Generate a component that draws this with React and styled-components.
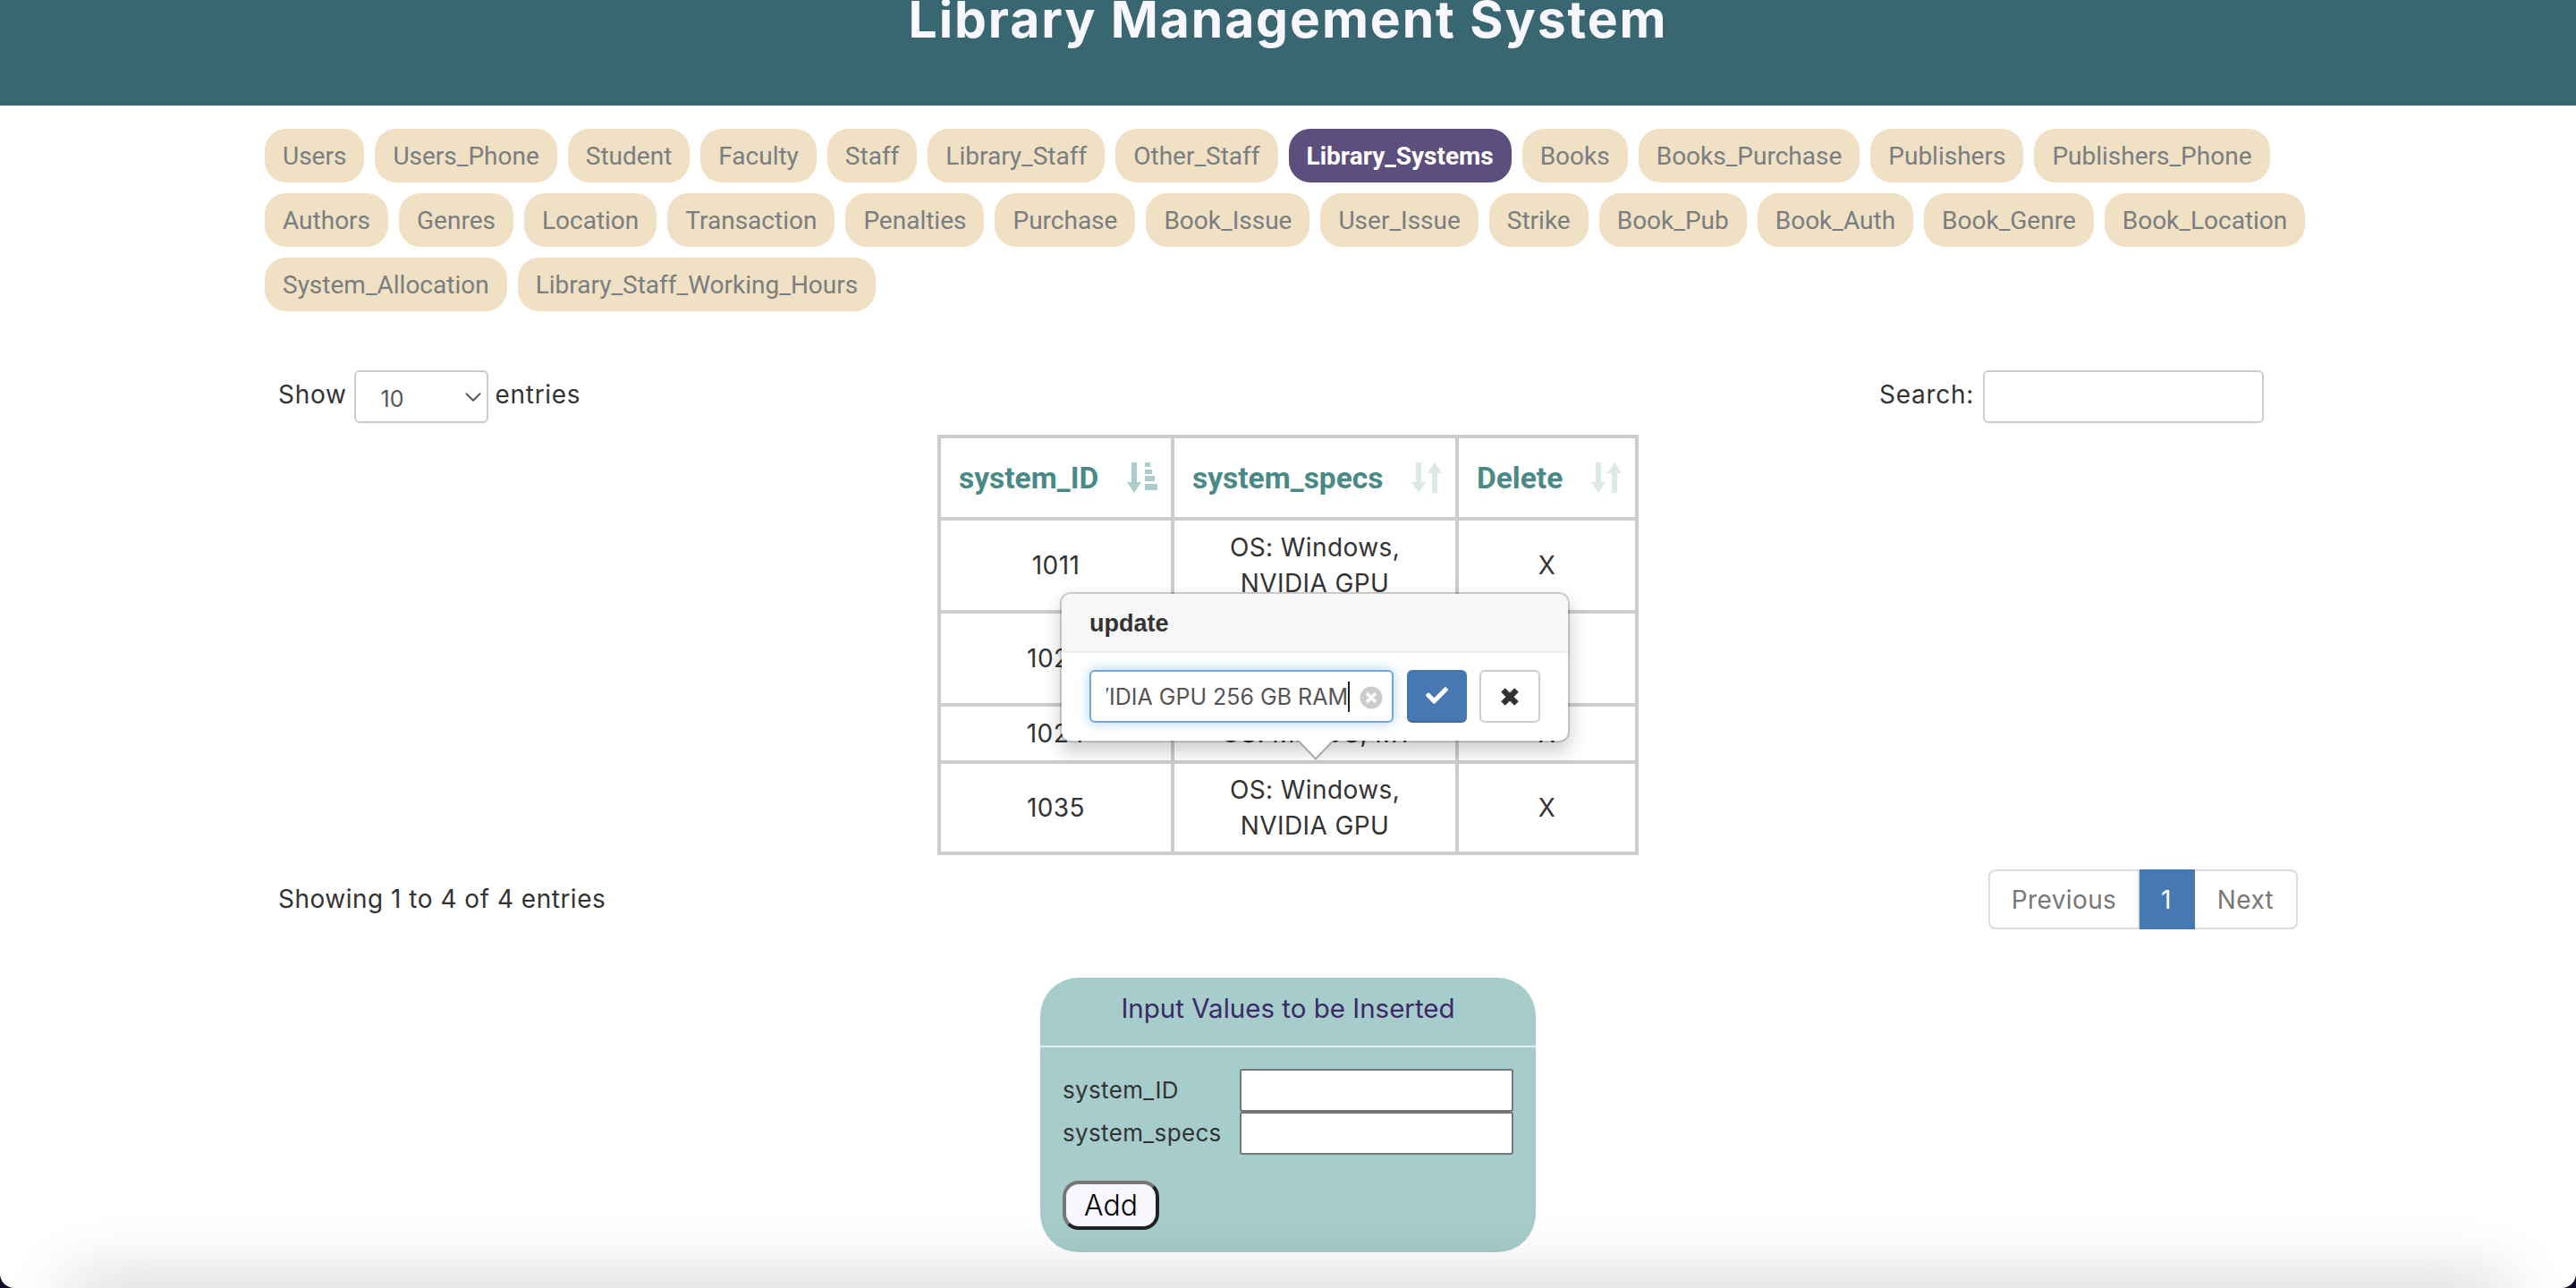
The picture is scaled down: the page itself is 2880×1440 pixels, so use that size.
import React from "react";
import styled, { createGlobalStyle } from "styled-components";
import { ChevronDown } from "lucide-react";
import { FaCheck } from "react-icons/fa";

const Global = createGlobalStyle`
  html, body { margin: 0; padding: 0; background: #fff; height: 1440px; overflow: hidden; }
  * { box-sizing: border-box; }
  body { font-family: Inter, "Liberation Sans", sans-serif; color: #333; font-size: 28px; }
`;

const Page = styled.div`
  position: relative;
  width: 2880px;
  height: 1440px;
  overflow: hidden;
  display: flex;
  flex-direction: column;
`;
const Header = styled.header`
  height: 118px;
  flex: none;
  background: #396771;
  display: flex;
  justify-content: center;
  overflow: hidden;
`;
const Title = styled.h1`
  margin: -14px 0 0;
  font-family: Inter, sans-serif;
  font-weight: 700;
  font-size: 57px;
  line-height: 72px;
  letter-spacing: 1.9px;
  color: #f8f7ff;
  white-space: nowrap;
`;
const Tabs = styled.nav`
  margin: 26px 0 0 296px;
  width: 2288px;
  display: flex;
  flex-wrap: wrap;
  gap: 12px;
`;
const Tab = styled.a`
  height: 60px;
  padding: 0 20px;
  display: flex;
  align-items: center;
  border-radius: 24px;
  font-family: Roboto, sans-serif;
  font-size: 28px;
  font-weight: ${(p) => (p.$active ? 700 : 400)};
  color: ${(p) => (p.$active ? "#fff" : "#797e81")};
  background: ${(p) => (p.$active ? "#5c4f7d" : "#f0e0c4")};
`;
const Toolbar = styled.div`
  margin-top: 66px;
  height: 59px;
  padding: 0 349px 0 311px;
  display: flex;
  justify-content: space-between;
  align-items: flex-start;
`;
const Group = styled.label`
  display: flex;
  align-items: flex-start;
  gap: 8px;
  line-height: 54px;
  letter-spacing: 0.7px;
`;
const SelectBox = styled.span`
  position: relative;
  display: block;
  width: 150px;
  height: 59px;
`;
const Select = styled.select`
  appearance: none;
  width: 100%;
  height: 100%;
  border: 2px solid #ccc;
  border-radius: 6px;
  background: #fff;
  padding: 4px 0 0 28px;
  font: 400 25px Inter, sans-serif;
  color: #555;
`;
const Chevron = styled(ChevronDown)`
  position: absolute;
  right: 2px;
  top: 15px;
  color: #555;
  pointer-events: none;
`;
const SearchInput = styled.input`
  width: 314px;
  height: 59px;
  border: 2px solid #ccc;
  border-radius: 6px;
  margin-left: 2px;
  background: #fff;
`;
const TableWrap = styled.div`
  position: relative;
  width: 784px;
  margin: 13px auto 0;
`;
const Table = styled.table`
  width: 784px;
  table-layout: fixed;
  border-collapse: separate;
  border-spacing: 0;
  border-left: 4px solid #ccc;
  border-top: 4px solid #ccc;
`;
const Row = styled.tr`
  height: ${(p) => p.$h}px;
`;
const Th = styled.th`
  padding: 0;
  border-right: 4px solid #ccc;
  border-bottom: 4px solid #ccc;
`;
const ThInner = styled.div`
  display: flex;
  justify-content: space-between;
  align-items: center;
  padding: 0 15px 0 20px;
  font-family: Roboto, sans-serif;
  font-weight: 700;
  font-size: 33.5px;
  color: #4a8a86;
`;
const Td = styled.td`
  padding: 0 12px;
  text-align: center;
  line-height: 40px;
  font-size: 28px;
  letter-spacing: 0.4px;
  color: #333;
  border-right: 4px solid #ccc;
  border-bottom: 4px solid #ccc;
`;
const Popover = styled.div`
  position: absolute;
  left: 137px;
  top: 176px;
  width: 570px;
  height: 168px;
  background: #fff;
  border: 2px solid rgba(0, 0, 0, 0.2);
  border-radius: 12px;
  box-shadow: 0 10px 20px rgba(0, 0, 0, 0.2);
  background-clip: padding-box;
  &::before {
    content: "";
    position: absolute;
    left: 263px;
    bottom: -22px;
    width: 0;
    height: 0;
    border-style: solid;
    border-width: 22px 21px 0;
    border-color: #aaa transparent transparent;
  }
  &::after {
    content: "";
    position: absolute;
    left: 265px;
    bottom: -19px;
    width: 0;
    height: 0;
    border-style: solid;
    border-width: 20px 19px 0;
    border-color: #fff transparent transparent;
  }
`;
const PopoverTitle = styled.div`
  height: 66px;
  padding: 0 31px;
  background: #f7f7f7;
  border-bottom: 2px solid #ebebeb;
  border-radius: 10px 10px 0 0;
  font: 700 27px/66px "Liberation Sans", sans-serif;
  color: #333;
`;
const PopoverBody = styled.div`
  display: flex;
  align-items: flex-start;
  padding: 19px 31px 0;
`;
const EditField = styled.div`
  position: relative;
  width: 341px;
  height: 59px;
  border: 2px solid #6ea8e0;
  border-radius: 6px;
  box-shadow: 0 0 14px rgba(102, 175, 233, 0.55);
  padding: 0 0 0 17px;
  background: #fff;
`;
const EditClip = styled.div`
  width: 272px;
  height: 55px;
  overflow: hidden;
  display: flex;
  justify-content: flex-end;
  align-items: center;
`;
const EditText = styled.span`
  flex: none;
  white-space: nowrap;
  font-size: 25px;
  line-height: 34px;
  color: #555;
  border-right: 2px solid #222;
`;
const ClearIcon = styled.svg`
  position: absolute;
  right: 10px;
  top: 16px;
  filter: blur(0.6px);
`;
const OkButton = styled.button`
  width: 68px;
  height: 59px;
  margin-left: 15px;
  border: none;
  border-bottom: 2px solid #3d6a9e;
  border-radius: 6px;
  background: #4679b2;
  color: #fff;
  display: flex;
  align-items: center;
  justify-content: center;
`;
const CancelButton = styled.button`
  width: 68px;
  height: 59px;
  margin-left: 14px;
  border: 2px solid #ccc;
  border-radius: 6px;
  background: #fff;
  color: #333;
  display: flex;
  align-items: center;
  justify-content: center;
`;
const FooterRow = styled.div`
  margin-top: 16px;
  height: 67px;
  padding: 0 311px;
  display: flex;
  justify-content: space-between;
  align-items: center;
`;
const Info = styled.div`
  letter-spacing: 0.5px;
  margin-top: -2px;
`;
const Pager = styled.div`
  display: flex;
  height: 67px;
`;
const PageLink = styled.a`
  display: flex;
  align-items: center;
  justify-content: center;
  width: ${(p) => p.$w}px;
  border: 2px solid #ddd;
  border-left-width: ${(p) => (p.$first ? 2 : 0)}px;
  border-radius: ${(p) => p.$radius || 0};
  font-size: 28px;
  letter-spacing: 0.4px;
  color: #777;
  ${(p) => p.$active && "background:#4679b2;border-color:#4679b2;color:#fff;"}
`;
const Card = styled.section`
  margin: 54px auto 0;
  width: 554px;
  height: 307px;
  border-radius: 43px;
  background: #a6cdcb;
`;
const CardTitle = styled.div`
  height: 78px;
  border-bottom: 2px solid #e8eeee;
  padding-top: 15px;
  text-align: center;
  font-size: 29.5px;
  line-height: 38px;
  color: #3a2a66;
`;
const CardForm = styled.form`
  padding: 24px 25px 0;
`;
const FieldRow = styled.div`
  display: flex;
  align-items: center;
  height: 48px;
`;
const FieldLabel = styled.label`
  width: 198px;
  margin-top: -2px;
  font-size: 26px;
  letter-spacing: 0.35px;
  color: #333;
`;
const FieldInput = styled.input`
  width: 306px;
  height: 48px;
  border: 2px solid #767676;
  border-radius: 3px;
  background: #fff;
`;
const AddButton = styled.button`
  display: block;
  margin-top: 29px;
  width: 108px;
  height: 55px;
  border: 4px solid;
  border-color: #767676 #222 #222 #767676;
  border-radius: 18px;
  background: #f8f7ff;
  font: 300 32px Inter, sans-serif;
  color: #000;
  padding: 0;
`;
const BottomGlow = styled.div`
  position: absolute;
  left: 84px;
  right: 84px;
  bottom: -30px;
  height: 30px;
  box-shadow: 0 0 74px 9px rgba(0, 0, 0, 0.2);
  pointer-events: none;
`;
const WindowEdge = styled.div`
  position: absolute;
  inset: 0;
  border-radius: 0 0 16px 16px;
  box-shadow: 0 0 0 30px #0b0b26;
  pointer-events: none;
`;

const tabs = [
  "Users","Users_Phone","Student","Faculty","Staff","Library_Staff","Other_Staff","Library_Systems","Books","Books_Purchase","Publishers","Publishers_Phone",
  "Authors","Genres","Location","Transaction","Penalties","Purchase","Book_Issue","User_Issue","Strike","Book_Pub","Book_Auth","Book_Genre","Book_Location",
  "System_Allocation","Library_Staff_Working_Hours",
];

const rows = [
  { id: "1011", spec: ["OS: Windows,", "NVIDIA GPU"], h: 104 },
  { id: "1022", spec: ["OS: Windows,", "NVIDIA GPU"], h: 104 },
  { id: "1024", spec: ["OS: MacOS, M1"], h: 64 },
  { id: "1035", spec: ["OS: Windows,", "NVIDIA GPU"], h: 102 },
];

function SortIcon({ active }) {
  const fade = "#dce9e7";
  const strong = "#a8cdca";
  return (
    <svg width="34" height="34" viewBox="0 0 34 34">
      <path d="M5 0h6v22h5l-8 12-8-12h5z" fill={active ? strong : fade} />
      {active ? (
        <path d="M20 0h6v5h-6zM20 8h8v5h-8zM20 15h11v6H20zM20 24h14v7H20z" fill={strong} />
      ) : (
        <path d="M23 34h6V12h5L26 0l-8 12h5z" fill={fade} />
      )}
    </svg>
  );
}

export default function App() {
  return (
    <Page>
      <Global />
      <Header>
        <Title>Library Management System</Title>
      </Header>
      <Tabs>
        {tabs.map((t) => (
          <Tab key={t} $active={t === "Library_Systems"}>{t}</Tab>
        ))}
      </Tabs>
      <Toolbar>
        <Group>
          Show
          <SelectBox>
            <Select defaultValue="10"><option>10</option></Select>
            <Chevron size={30} strokeWidth={1.5} />
          </SelectBox>
          entries
        </Group>
        <Group>
          Search:
          <SearchInput />
        </Group>
      </Toolbar>
      <TableWrap>
        <Table>
          <colgroup>
            <col style={{ width: 261 }} />
            <col style={{ width: 318 }} />
            <col style={{ width: 201 }} />
          </colgroup>
          <thead>
            <Row $h={92}>
              <Th><ThInner>system_ID<SortIcon active /></ThInner></Th>
              <Th><ThInner>system_specs<SortIcon /></ThInner></Th>
              <Th><ThInner>Delete<SortIcon /></ThInner></Th>
            </Row>
          </thead>
          <tbody>
            {rows.map((r) => (
              <Row key={r.id} $h={r.h}>
                <Td>{r.id}</Td>
                <Td>{r.spec.map((l) => <div key={l}>{l}</div>)}</Td>
                <Td>X</Td>
              </Row>
            ))}
          </tbody>
        </Table>
        <Popover>
          <PopoverTitle>update</PopoverTitle>
          <PopoverBody>
            <EditField>
              <EditClip>
                <EditText>OS: Windows, NVIDIA GPU 256 GB RAM</EditText>
              </EditClip>
              <ClearIcon width="26" height="26" viewBox="0 0 26 26">
                <circle cx="13" cy="13" r="12.500" fill="#ccc" />
                <path d="M8 8l10 10M18 8L8 18" stroke="#fff" strokeWidth="3.500" />
              </ClearIcon>
            </EditField>
            <OkButton><FaCheck size={25} /></OkButton>
            <CancelButton>
              <svg width="24" height="22" viewBox="0 0 24 22">
                <path d="M4.500 3.500l15 15M19.500 3.500l-15 15" stroke="#333" strokeWidth="6.500" />
              </svg>
            </CancelButton>
          </PopoverBody>
        </Popover>
      </TableWrap>
      <FooterRow>
        <Info>Showing 1 to 4 of 4 entries</Info>
        <Pager>
          <PageLink $w={169} $first $radius="8px 0 0 8px">Previous</PageLink>
          <PageLink $w={62} $active>1</PageLink>
          <PageLink $w={115} $radius="0 8px 8px 0">Next</PageLink>
        </Pager>
      </FooterRow>
      <Card>
        <CardTitle>Input Values to be Inserted</CardTitle>
        <CardForm>
          <FieldRow>
            <FieldLabel>system_ID</FieldLabel>
            <FieldInput />
          </FieldRow>
          <FieldRow>
            <FieldLabel>system_specs</FieldLabel>
            <FieldInput />
          </FieldRow>
          <AddButton type="button">Add</AddButton>
        </CardForm>
      </Card>
      <BottomGlow />
      <WindowEdge />
    </Page>
  );
}
